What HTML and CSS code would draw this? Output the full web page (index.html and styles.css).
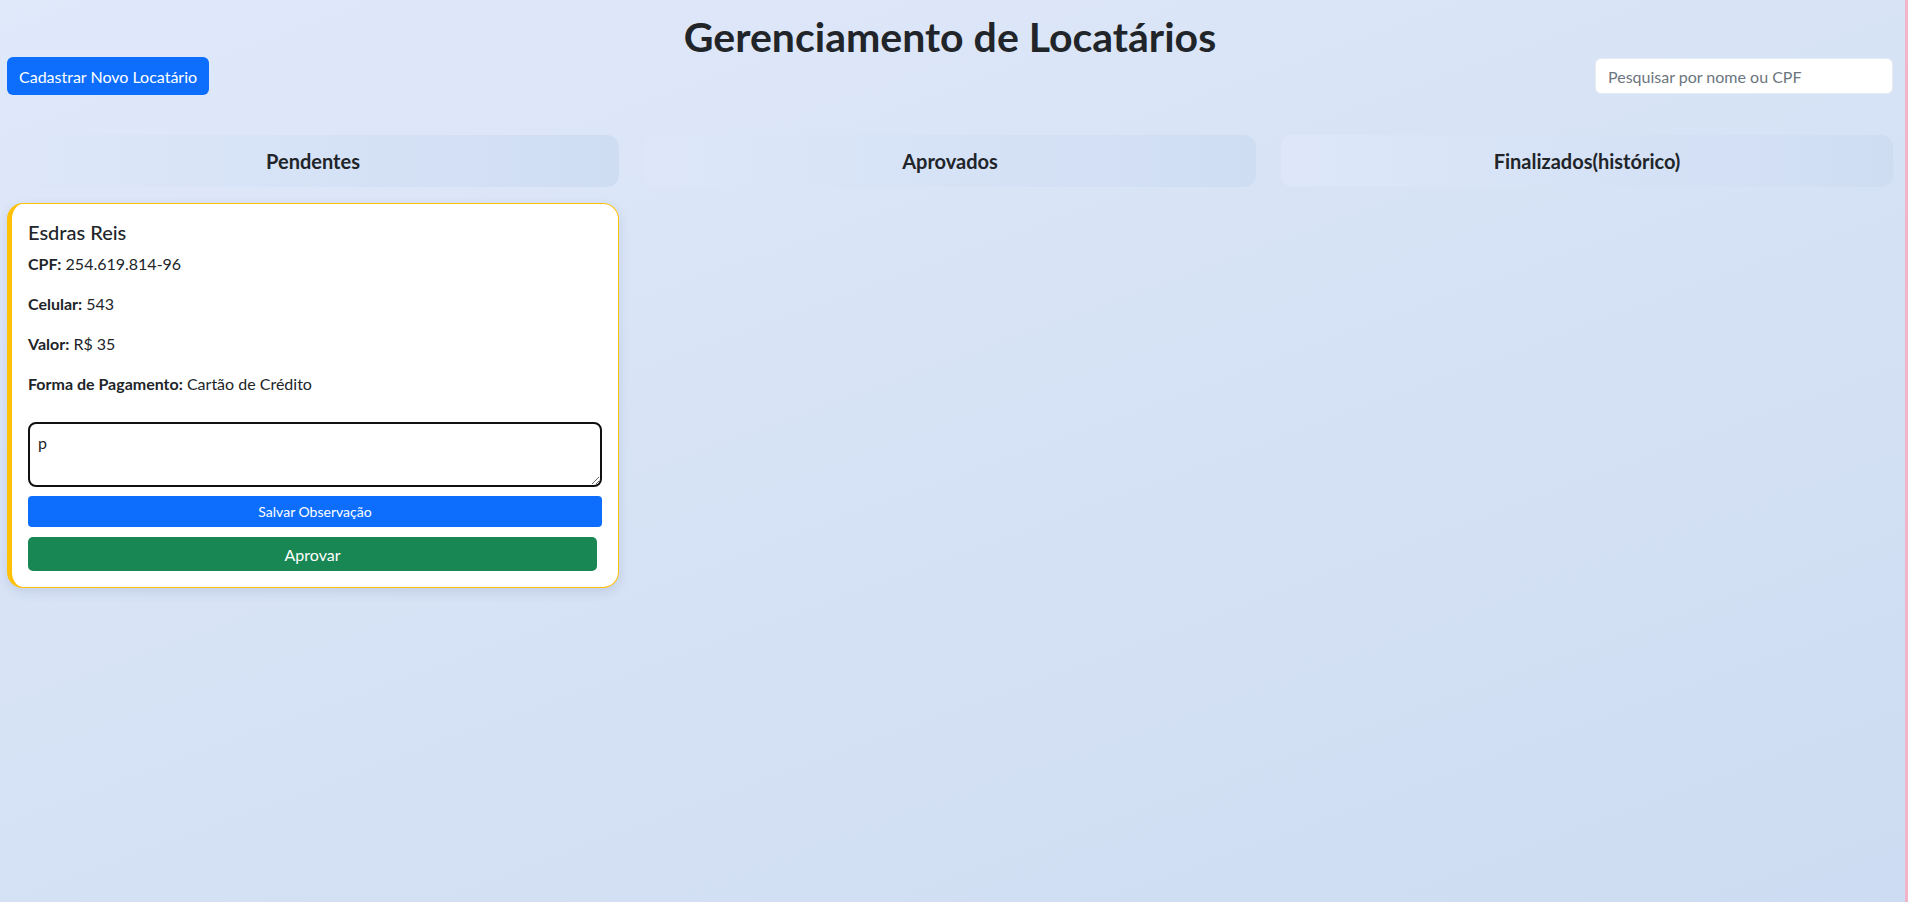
FILE: index.html
```html
<!DOCTYPE html>
<html lang="pt-BR">
<head>
<meta charset="utf-8">
<title>Gerenciamento de Locatários</title>
<link rel="stylesheet" href="styles.css">
</head>
<body>
<div class="app">
  <main class="page">
    <h1 class="title">Gerenciamento de Locatários</h1>
    <div class="toolbar">
      <button class="btn btn-primary" type="button">Cadastrar Novo Locatário</button>
      <input class="search" type="text" placeholder="Pesquisar por nome ou CPF">
    </div>
    <div class="board">
      <section class="column">
        <h2 class="col-head">Pendentes</h2>
        <div class="card">
          <h3 class="card-title">Esdras Reis</h3>
          <p class="field"><b>CPF:</b> 254.619.814-96</p>
          <p class="field"><b>Celular:</b> 543</p>
          <p class="field"><b>Valor:</b> R$ 35</p>
          <p class="field"><b>Forma de Pagamento:</b> Cartão de Crédito</p>
          <textarea class="note" autofocus>p</textarea>
          <button class="btn-save" type="button">Salvar Observação</button>
          <button class="btn-approve" type="button">Aprovar</button>
        </div>
      </section>
      <section class="column">
        <h2 class="col-head">Aprovados</h2>
      </section>
      <section class="column">
        <h2 class="col-head">Finalizados(histórico)</h2>
      </section>
    </div>
  </main>
  <div class="edge"></div>
</div>
</body>
</html>
```
FILE: styles.css
```css
html, body {
  margin: 0;
  height: 100%;
}
body {
  font-family: Lato, "Noto Sans", sans-serif;
  color: #212529;
}
.app {
  display: flex;
  min-height: 100vh;
}
.page {
  flex: 1;
  background: linear-gradient(160deg, #e0e9fa 0%, #d6e2f5 50%, #cddcf2 100%);
  padding: 16px 12px 0 7px;
}
.edge {
  width: 3px;
  background: #f2b4c8;
}
.title {
  text-align: center;
  font-size: 41px;
  font-weight: 700;
  line-height: 41px;
  margin: 0;
  color: #212529;
}
.toolbar {
  display: flex;
  justify-content: space-between;
  align-items: flex-start;
}
.btn {
  font-family: inherit;
  cursor: pointer;
}
.btn-primary {
  height: 38px;
  padding: 0 12px;
  font-size: 16px;
  background: #0d6efd;
  color: #fff;
  border: none;
  border-radius: 6px;
}
.search {
  width: 298px;
  height: 36px;
  margin-top: 1px;
  box-sizing: border-box;
  border: 1px solid #e6ebf2;
  border-radius: 6px;
  padding: 0 12px;
  font-family: inherit;
  font-size: 16px;
  background: #fff;
  color: #212529;
}
.search::placeholder {
  color: #6c757d;
}
.board {
  display: grid;
  grid-template-columns: repeat(3, 1fr);
  column-gap: 25px;
  margin-top: 40px;
  align-items: start;
}
.col-head {
  margin: 0;
  height: 52px;
  display: flex;
  align-items: center;
  justify-content: center;
  font-size: 20px;
  font-weight: 700;
  border-radius: 12px;
  background: linear-gradient(90deg, #dde7f9 0%, #cfddf3 100%);
}
.card {
  margin-top: 16px;
  background: #fff;
  border: 1px solid #ffc107;
  border-left: 5px solid #ffc107;
  border-radius: 16px;
  padding: 16px;
  box-shadow: 0 4px 12px rgba(40, 60, 110, 0.12);
}
.card-title {
  font-size: 20px;
  font-weight: 500;
  line-height: 24px;
  margin: 0 0 8px;
}
.field {
  margin: 0 0 16px;
  font-size: 16px;
  line-height: 24px;
}
.field b {
  font-weight: 700;
}
.note {
  display: block;
  width: 100%;
  height: 65px;
  box-sizing: border-box;
  margin-top: 26px;
  border: 2px solid #111;
  border-radius: 8px;
  padding: 9px 8px 6px;
  font-family: inherit;
  font-size: 16px;
  color: #212529;
  resize: vertical;
  outline: none;
}
.btn-save {
  display: block;
  width: 100%;
  height: 31px;
  margin-top: 9px;
  background: #0d6efd;
  color: #fff;
  border: none;
  border-radius: 4px;
  font-family: inherit;
  font-size: 14px;
}
.btn-approve {
  display: block;
  width: calc(100% - 5px);
  height: 34px;
  margin-top: 10px;
  background: #198754;
  color: #fff;
  border: none;
  border-radius: 5px;
  font-family: inherit;
  font-size: 16px;
}
```
